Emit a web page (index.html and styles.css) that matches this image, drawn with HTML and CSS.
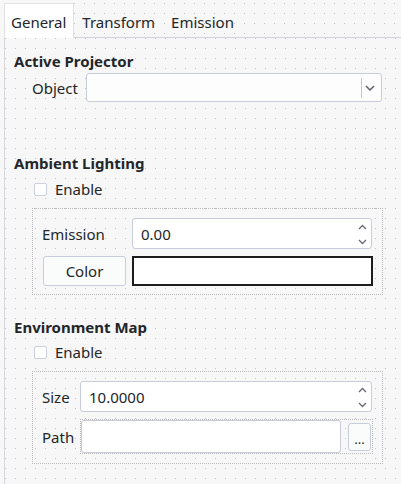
FILE: index.html
```html
<!DOCTYPE html>
<html>
<head>
<meta charset="utf-8">
<link rel="stylesheet" href="styles.css">
</head>
<body>
<div class="root">
  <div class="tabbar">
    <div class="tab tab-active">General</div>
    <div class="tab">Transform</div>
    <div class="tab">Emission</div>
  </div>
  <div class="pane">
    <div class="heading h1">Active Projector</div>
    <div class="row-object">
      <div class="label label-object">Object</div>
      <div class="combo">
        <span class="combo-sep"></span>
        <svg class="combo-arrow" width="10" height="6" viewBox="0 0 10 6"><path d="M1 1 L5 5 L9 1" fill="none" stroke="#5d616b" stroke-width="1.5"/></svg>
      </div>
    </div>

    <div class="heading h2">Ambient Lighting</div>
    <div class="check-row"><span class="checkbox"></span><span class="label">Enable</span></div>
    <div class="group group1">
      <div class="label">Emission</div>
      <div class="spin spin-emission">
        <span class="spin-text">0.00</span>
        <span class="spin-arrows">
          <svg width="9" height="6" viewBox="0 0 9 6"><path d="M1 5 L4.5 1.5 L8 5" fill="none" stroke="#6b6e78" stroke-width="1.4"/></svg>
          <svg width="9" height="6" viewBox="0 0 9 6"><path d="M1 1 L4.5 4.5 L8 1" fill="none" stroke="#6b6e78" stroke-width="1.4"/></svg>
        </span>
      </div>
      <div class="button btn-color">Color</div>
      <div class="color-box"></div>
    </div>

    <div class="heading h3">Environment Map</div>
    <div class="check-row check-row2"><span class="checkbox"></span><span class="label">Enable</span></div>
    <div class="group group2">
      <div class="label">Size</div>
      <div class="spin spin-size">
        <span class="spin-text">10.0000</span>
        <span class="spin-arrows">
          <svg width="9" height="6" viewBox="0 0 9 6"><path d="M1 5 L4.5 1.5 L8 5" fill="none" stroke="#6b6e78" stroke-width="1.4"/></svg>
          <svg width="9" height="6" viewBox="0 0 9 6"><path d="M1 1 L4.5 4.5 L8 1" fill="none" stroke="#6b6e78" stroke-width="1.4"/></svg>
        </span>
      </div>
      <div class="label">Path</div>
      <div class="path-layout">
        <div class="path-field"></div>
        <div class="button btn-browse">...</div>
      </div>
    </div>
  </div>
</div>
</body>
</html>
```
FILE: styles.css
```css
html, body {
  margin: 0;
  padding: 0;
}
body {
  width: 401px;
  height: 484px;
  overflow: hidden;
  font-family: "Noto Sans", "Open Sans", sans-serif;
  font-size: 15px;
  color: #232629;
}
.root {
  width: 401px;
  height: 484px;
  display: flex;
  flex-direction: column;
  background-color: #f7f7f7;
  background-image: conic-gradient(at 1px 1px, transparent 75%, #c2c2c2 0);
  background-size: 10px 10px;
  background-position: 4px 3px;
}
.tabbar {
  display: flex;
  height: 34px;
  padding-top: 3px;
  padding-left: 4px;
  box-sizing: content-box;
  flex: none;
}
.tab {
  height: 29px;
  padding: 5px 8px 0 8px;
  line-height: 28px;
  white-space: nowrap;
}
.tab-active {
  background: #ffffff;
  padding-left: 7px;
  box-shadow: inset 1px 1px 0 #e2e2e6, inset -1px 0 0 #e2e2e6;
  position: relative;
  z-index: 1;
  margin-bottom: -1px;
  height: 30px;
}
.pane {
  flex: 1;
  margin-left: 4px;
  border-left: 1px solid #d6d6dc;
  border-top: 1px solid #d0d1da;
  display: flex;
  flex-direction: column;
  background-color: #f7f7f7;
  background-image: conic-gradient(at 1px 1px, transparent 75%, #c2c2c2 0);
  background-size: 10px 10px;
  background-position: 0 0;
}
.heading {
  font-weight: bold;
  line-height: 20px;
  margin-left: 9px;
  white-space: nowrap;
}
.h1 { margin-top: 13px; }
.h2 { margin-top: 51px; }
.h3 { margin-top: 22px; }
.label {
  line-height: 20px;
  white-space: nowrap;
}
.row-object {
  display: flex;
  align-items: center;
  margin-top: 2px;
  margin-left: 27px;
}
.label-object {
  width: 54px;
}
.combo {
  width: 296px;
  height: 29px;
  box-sizing: border-box;
  background: #fcfdfc;
  border: 1px solid #c8ccd8;
  border-radius: 3px;
  display: flex;
  align-items: center;
  justify-content: flex-end;
  padding-right: 6px;
  gap: 3px;
}
.combo-sep {
  width: 1px;
  height: 20px;
  background: #c4c6ce;
}
.combo-arrow {
  display: block;
}
.check-row {
  display: flex;
  align-items: center;
  margin-left: 29px;
  margin-top: 6px;
  height: 20px;
}
.check-row2 {
  margin-top: 5px;
}
.checkbox {
  width: 13px;
  height: 13px;
  box-sizing: border-box;
  background: #ffffff;
  border: 1px solid #cbd0da;
  border-radius: 2px;
  margin-right: 8px;
}
.group {
  margin-left: 27px;
  width: 351px;
  box-sizing: border-box;
  border: 1px dotted #b9b9bd;
  display: grid;
  align-items: center;
}
.group1 {
  margin-top: 9px;
  padding: 9px 9px 8px 9px;
  grid-template-columns: 83px 241px;
  column-gap: 7px;
  row-gap: 7px;
}
.group2 {
  margin-top: 9px;
  padding: 9px 9px 9px 9px;
  grid-template-columns: 38px 293px;
  column-gap: 0;
  row-gap: 7px;
}
.spin {
  height: 31px;
  box-sizing: border-box;
  background: #ffffff;
  border: 1px solid #c8ccd8;
  border-radius: 3px;
  display: flex;
  align-items: center;
  padding-left: 8px;
}
.spin-emission {
  width: 240px;
}
.spin-size {
  width: 292px;
}
.spin-text {
  flex: 1;
  line-height: 20px;
}
.spin-arrows {
  display: flex;
  flex-direction: column;
  justify-content: space-between;
  height: 21px;
  width: 18px;
  align-items: center;
  margin-top: 1px;
}
.spin-arrows svg {
  display: block;
}
.button {
  box-sizing: border-box;
  background: #fafcfc;
  border: 1px solid #c8cdda;
  border-radius: 3px;
  display: flex;
  align-items: center;
  justify-content: center;
}
.btn-color {
  height: 30px;
  width: 83px;
  margin-left: 1px;
}
.color-box {
  height: 30px;
  width: 241px;
  box-sizing: border-box;
  background: #ffffff;
  border: 2px solid #1c1c1c;
}
.path-layout {
  border: 1px dotted #b9b9bd;
  display: flex;
  align-items: center;
  gap: 7px;
  padding-right: 1px;
  width: 293px;
  box-sizing: border-box;
}
.path-field {
  width: 260px;
  height: 33px;
  box-sizing: border-box;
  background: #ffffff;
  border: 1px solid #c8ccd8;
  border-radius: 3px;
}
.btn-browse {
  width: 23px;
  height: 28px;
  font-size: 13px;
  line-height: 14px;
  padding-top: 4px;
}
```
